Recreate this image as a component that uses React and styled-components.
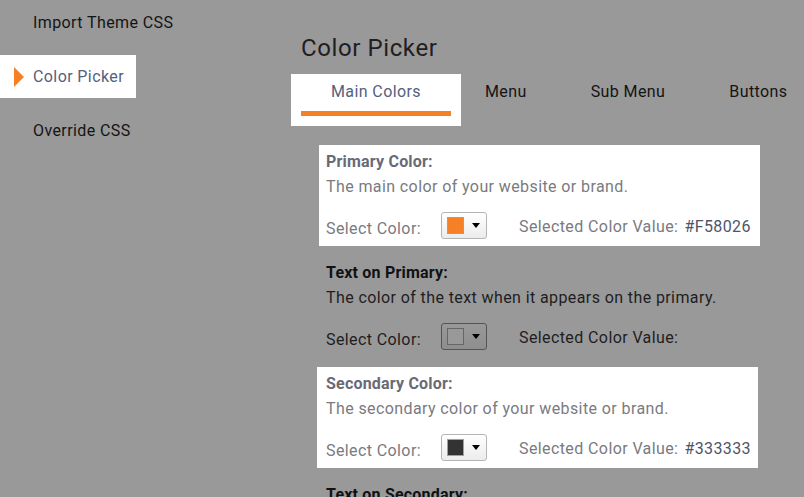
import React from "react";
import styled, { createGlobalStyle } from "styled-components";

const Global = createGlobalStyle`
  html, body { margin: 0; padding: 0; background: #999999; }
  body { font-family: Roboto, "Liberation Sans", sans-serif; letter-spacing: 0.4px; overflow: hidden; }
  * { box-sizing: border-box; }
`;

const Page = styled.div`
  display: flex;
  width: 804px;
  height: 497px;
  overflow: hidden;
  background: #999999;
`;

const Sidebar = styled.nav`
  width: 291px;
  flex: none;
  display: flex;
  flex-direction: column;
  align-items: flex-start;
  gap: 11px;
  padding-top: 1px;
`;

const NavItem = styled.div`
  height: 43px;
  display: flex;
  align-items: center;
  gap: 9px;
  padding: 0 12px 0 ${(p) => (p.$active ? "14px" : "33px")};
  background: ${(p) => (p.$active ? "#ffffff" : "transparent")};
  color: ${(p) => (p.$active ? "#55607e" : "#141414")};
  font-size: 16px;
  white-space: nowrap;
`;

const Arrow = styled.span`
  width: 0;
  height: 0;
  border-top: 10px solid transparent;
  border-bottom: 10px solid transparent;
  border-left: 10px solid #f58026;
`;

const Main = styled.main`
  flex: 1;
  display: flex;
  flex-direction: column;
  padding-top: 34px;
`;

const Title = styled.h1`
  margin: 0 0 0 10px;
  font-size: 24px;
  font-weight: 400;
  line-height: 28px;
  letter-spacing: 0.6px;
  color: #1e1e24;
`;

const Tabs = styled.div`
  display: flex;
  margin-top: 12px;
  align-items: flex-start;
`;

const Tab = styled.div`
  padding: ${(p) => (p.$active ? "10px" : "10px 0")};
  background: ${(p) => (p.$active ? "#ffffff" : "transparent")};
  margin-right: ${(p) => (p.$active ? "-8px" : "0")};
`;

const TabInner = styled.div`
  width: ${(p) => (p.$active ? "150px" : "auto")};
  padding: ${(p) => (p.$active ? "0" : "0 32px")};
  text-align: center;
  font-size: 16px;
  line-height: 16px;
  height: 32px;
  white-space: nowrap;
  color: ${(p) => (p.$active ? "#55607e" : "#141414")};
  border-bottom: ${(p) => (p.$active ? "5px solid #f58026" : "5px solid transparent")};
`;

const Sections = styled.div`
  display: flex;
  flex-direction: column;
  gap: 10px;
  margin-top: 19px;
  margin-left: 28px;
`;

const Section = styled.section`
  width: 441px;
  height: 101px;
  flex: none;
  padding: 7px 0 0 ${(p) => p.$pad || 7}px;
  margin-left: ${(p) => p.$shift || 0}px;
  background: ${(p) => (p.$lit ? "#ffffff" : "transparent")};
`;

const Heading = styled.div`
  font-size: 16px;
  font-weight: 700;
  line-height: 20px;
  letter-spacing: 0.2px;
  color: ${(p) => (p.$lit ? "#686a76" : "#111114")};
`;

const Desc = styled.div`
  margin-top: 5px;
  font-size: 16px;
  line-height: 20px;
  white-space: nowrap;
  color: ${(p) => (p.$lit ? "#7a7a80" : "#1e1e22")};
`;

const Row = styled.div`
  display: flex;
  align-items: flex-end;
  margin-top: 15px;
  height: 27px;
`;

const Label = styled.span`
  font-size: 16px;
  line-height: 20px;
  width: 115px;
  flex: none;
  white-space: nowrap;
  color: ${(p) => (p.$lit ? "#7a7a80" : "#1e1e22")};
`;

const ValueLabel = styled.span`
  margin-left: 32px;
  margin-bottom: 2px;
  font-size: 16px;
  line-height: 20px;
  white-space: nowrap;
  color: ${(p) => (p.$lit ? "#7a7a80" : "#1e1e22")};
`;

const Value = styled.span`
  margin-left: 6px;
  color: ${(p) => (p.$lit ? "#4f5468" : "#1e1e22")};
`;

const SwatchButton = styled.div`
  width: 46px;
  height: 27px;
  flex: none;
  display: flex;
  align-items: center;
  gap: 8px;
  padding-left: 5px;
  border-radius: 3px;
  border: 1px solid ${(p) => (p.$lit ? "#b4b4b4" : "#545454")};
  background: ${(p) =>
    p.$lit ? "linear-gradient(#ffffff, #ececec)" : "linear-gradient(#999999, #8e8e8e)"};
`;

const Swatch = styled.span`
  width: 17px;
  height: 17px;
  border: 1px solid ${(p) => (p.$lit ? "#a0a0a0" : "#666666")};
  background: ${(p) => p.$color};
`;

const Caret = () => (
  <svg width="8" height="5" viewBox="0 0 8 5">
    <path d="M0 0 L8 0 L4 5 Z" fill="#000" />
  </svg>
);

const data = [
  {
    title: "Primary Color:",
    desc: "The main color of your website or brand.",
    color: "#F58026",
    value: "#F58026",
    lit: true,
  },
  {
    title: "Text on Primary:",
    desc: "The color of the text when it appears on the primary.",
    color: "#999999",
    value: "",
    lit: false,
  },
  {
    title: "Secondary Color:",
    desc: "The secondary color of your website or brand.",
    color: "#333333",
    value: "#333333",
    lit: true,
    shift: -2,
    pad: 9,
  },
  {
    title: "Text on Secondary:",
    desc: "The color of the text when it appears on the secondary.",
    color: "#999999",
    value: "",
    lit: false,
  },
];

export default function App() {
  return (
    <Page>
      <Global />
      <Sidebar>
        <NavItem>Import Theme CSS</NavItem>
        <NavItem $active>
          <Arrow />
          Color Picker
        </NavItem>
        <NavItem>Override CSS</NavItem>
      </Sidebar>
      <Main>
        <Title>Color Picker</Title>
        <Tabs>
          <Tab $active>
            <TabInner $active>Main Colors</TabInner>
          </Tab>
          <Tab>
            <TabInner>Menu</TabInner>
          </Tab>
          <Tab>
            <TabInner>Sub Menu</TabInner>
          </Tab>
          <Tab>
            <TabInner>Buttons</TabInner>
          </Tab>
        </Tabs>
        <Sections>
          {data.map((d) => (
            <Section key={d.title} $lit={d.lit} $shift={d.shift} $pad={d.pad}>
              <Heading $lit={d.lit}>{d.title}</Heading>
              <Desc $lit={d.lit}>{d.desc}</Desc>
              <Row>
                <Label $lit={d.lit}>Select Color:</Label>
                <SwatchButton $lit={d.lit}>
                  <Swatch $lit={d.lit} $color={d.color} />
                  <Caret />
                </SwatchButton>
                <ValueLabel $lit={d.lit}>
                  Selected Color Value:
                  {d.value && <Value $lit={d.lit}>{d.value}</Value>}
                </ValueLabel>
              </Row>
            </Section>
          ))}
        </Sections>
      </Main>
    </Page>
  );
}
